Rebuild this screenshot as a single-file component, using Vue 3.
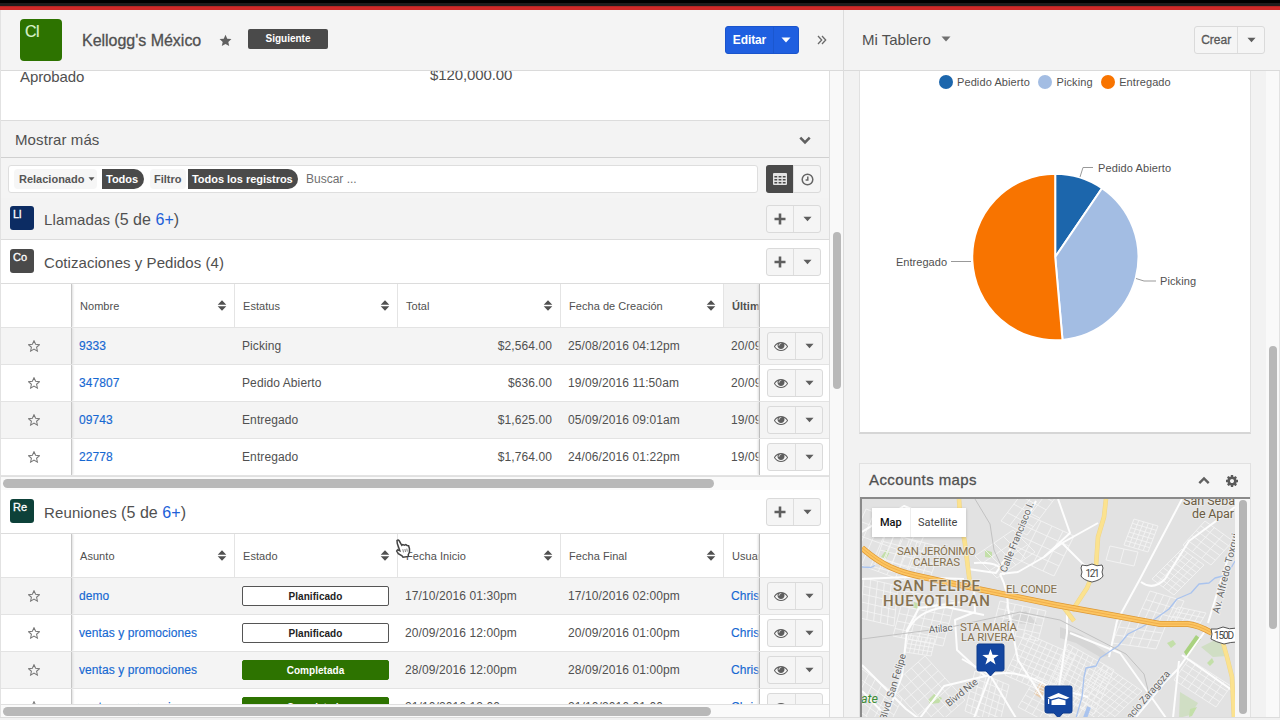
<script setup>
const quotes = {
  heads: ['Nombre', 'Estatus', 'Total', 'Fecha de Creación'],
  last: 'Última Modificación',
  sorted: true,
  rows: [
    ['9333', 'Picking', '$2,564.00', '25/08/2016 04:12pm', '20/09/2016'],
    ['347807', 'Pedido Abierto', '$636.00', '19/09/2016 11:50am', '20/09/2016'],
    ['09743', 'Entregado', '$1,625.00', '05/09/2016 09:01am', '19/09/2016'],
    ['22778', 'Entregado', '$1,764.00', '24/06/2016 01:22pm', '19/09/2016'],
  ],
}
const meetings = {
  heads: ['Asunto', 'Estado', 'Fecha Inicio', 'Fecha Final'],
  last: 'Usuario',
  sorted: false,
  rows: [
    ['demo', 'Planificado', '17/10/2016 01:30pm', '17/10/2016 02:00pm', 'Christian'],
    ['ventas y promociones', 'Planificado', '20/09/2016 12:00pm', '20/09/2016 01:00pm', 'Christian'],
    ['ventas y promociones', 'Completada', '28/09/2016 12:00pm', '28/09/2016 01:00pm', 'Christian'],
    ['ventas y promociones', 'Completada', '21/10/2016 12:00pm', '21/10/2016 01:00pm', 'Christian'],
  ],
}
const panels = [
  { abbr: 'Ll', tone: 'navy', name: 'Llamadas', count: '5 de ', more: '6+' },
  { abbr: 'Co', tone: 'gray', name: 'Cotizaciones y Pedidos', count: '4', more: '', table: quotes },
  { abbr: 'Re', tone: 'teal', name: 'Reuniones', count: '5 de ', more: '6+', table: meetings },
]
const legend = [
  { label: 'Pedido Abierto', tone: 'l-blue' },
  { label: 'Picking', tone: 'l-pale' },
  { label: 'Entregado', tone: 'l-orange' },
]

// Each block of streets: origin, two side vectors, and the number of cells along each side.
const blocks = [
  [866, 508, 60, 22, -22, 50, 7, 4],
  [886, 532, 55, 14, -12, 34, 7, 4],
  [864, 577, 34, 8, -4, 40, 5, 5],
  [905, 590, 50, 10, -12, 45, 6, 6],
  [909, 634, 26, 4, -4, 17, 6, 4],
  [862, 668, 40, 30, -16, 32, 6, 4],
  [925, 655, 40, 44, -34, 30, 6, 5],
  [975, 555, 38, -26, 22, 22, 4, 3],
  [1001, 520, 32, -42, 26, 14, 5, 3],
  [1030, 515, 44, 20, -20, 40, 4, 4],
  [1000, 600, 46, 10, -8, 30, 6, 4],
  [1025, 632, 50, 22, -20, 42, 9, 8],
  [1068, 643, 46, 26, -20, 44, 9, 9],
  [1036, 676, 50, 26, -18, 30, 7, 5],
  [1104, 664, 38, 26, -36, 34, 8, 8],
  [1134, 518, 24, 7, -10, 26, 5, 6],
  [1110, 545, 28, 6, -4, 14, 2, 1],
  [1182, 548, 22, 16, -30, 30, 4, 8],
  [1205, 520, 28, 20, -22, 24, 3, 5],
  [1150, 590, 34, 10, -12, 26, 5, 3],
  [1122, 618, 44, 6, -10, 24, 5, 3],
  [1178, 606, 28, 6, -8, 14, 5, 3],
  [1189, 658, 42, 27, -15, 21, 6, 4],
  [975, 670, 34, 14, -10, 40, 6, 6],
]
const streets = blocks
  .map(([x, y, ux, uy, vx, vy, nu, nv]) => {
    let d = ''
    for (let i = 0; i <= nu; i++) {
      const t = i / nu
      d += `M${x + ux * t} ${y + uy * t}l${vx} ${vy}`
    }
    for (let j = 0; j <= nv; j++) {
      const t = j / nv
      d += `M${x + vx * t} ${y + vy * t}l${ux} ${uy}`
    }
    return d
  })
  .join('')
</script>

<template>
  <div class="screen">
    <svg class="defs" width="0" height="0">
      <symbol id="i-star" viewBox="0 0 14 14">
        <path d="M7 .8l1.900 4.200 4.500.5-3.400 3 1 4.500L7 10.700 3 13l1-4.500-3.400-3 4.500-.5z" />
      </symbol>
      <symbol id="i-caret" viewBox="0 0 10 6"><path d="M.5.5h9L5 5.500z" /></symbol>
      <symbol id="i-plus" viewBox="0 0 12 12"><path d="M4.700.5h2.600v4.200h4.200v2.600H7.300v4.200H4.700V7.300H.5V4.700h4.200z" /></symbol>
      <symbol id="i-sort" viewBox="0 0 10 11"><path d="M5 .3l4.300 4.400H.7zM5 10.700L.7 6.300h8.600z" /></symbol>
      <symbol id="i-eye" viewBox="0 0 1792 1792">
        <path d="M1664 960q-152-236-381-353 61 104 61 225 0 185-131.500 316.500t-316.500 131.500-316.500-131.500-131.500-316.500q0-121 61-225-229 117-381 353 133 205 333.500 326.500t434.500 121.500 434.500-121.500 333.500-326.500zm-720-384q0-20-14-34t-34-14q-125 0-214.500 89.500t-89.500 214.500q0 20 14 34t34 14 34-14 14-34q0-86 61-147t147-61q20 0 34-14t14-34zm848 384q0 34-20 69-140 230-376.500 368.500t-499.500 138.500-499.500-139-376.500-368q-20-35-20-69t20-69q140-229 376.500-368t499.500-139 499.500 139 376.500 368q20 35 20 69z" />
      </symbol>
    </svg>

    <div class="topbar"></div>

    <div class="columns">
      <main class="record">
        <header class="head">
          <span class="module">Cl</span>
          <h1 class="name">Kellogg's México</h1>
          <svg class="fav" width="13" height="13"><use href="#i-star" /></svg>
          <span class="next">Siguiente</span>
          <div class="edit">
            <span class="edit-label">Editar</span>
            <span class="edit-caret"><svg width="10" height="6"><use href="#i-caret" /></svg></span>
          </div>
          <svg class="more" width="10" height="10" viewBox="0 0 10 10"><path d="M1 1l3.700 4L1 9M5 1l3.700 4L5 9" /></svg>
        </header>

        <div class="body">
          <div class="scroll">
            <div class="fields">
              <span class="status">Aprobado</span>
              <span class="amount">$120,000.00</span>
            </div>
            <div class="show-more">
              <span>Mostrar más</span>
              <svg width="12" height="9" viewBox="0 0 12 9"><path d="M1.300 1.700L6 6.500l4.700-4.800" /></svg>
            </div>
            <div class="filters">
              <div class="search">
                <span class="chip rel">Relacionado <svg width="7" height="4"><use href="#i-caret" /></svg></span>
                <span class="pill p1">Todos</span>
                <span class="chip fil">Filtro</span>
                <span class="pill p2">Todos los registros</span>
                <span class="hint">Buscar ...</span>
              </div>
              <div class="btns toggle">
                <span class="btn on">
                  <svg width="14" height="12" viewBox="0 0 14 12">
                    <path fill-rule="evenodd" d="M1 0h12a1 1 0 0 1 1 1v10a1 1 0 0 1-1 1H1a1 1 0 0 1-1-1V1a1 1 0 0 1 1-1zM1.400 3v1.500h2.800V3zm4.200 0v1.500h2.800V3zm4.200 0v1.500h2.800V3zM1.400 6v1.500h2.800V6zm4.200 0v1.500h2.800V6zm4.200 0v1.500h2.800V6zM1.400 9v1.500h2.800V9zm4.200 0v1.500h2.800V9zm4.200 0v1.500h2.800V9z" />
                  </svg>
                </span>
                <span class="btn">
                  <svg class="line" width="13" height="13" viewBox="0 0 13 13"><circle cx="6.500" cy="6.500" r="5.300" /><path d="M6.800 3.500v3.400H4.600" /></svg>
                </span>
              </div>
            </div>

            <section v-for="p in panels" :key="p.name" class="panel" :class="{ open: p.table }">
              <div class="panel-head">
                <span class="tag" :class="p.tone">{{ p.abbr }}</span>
                <h2 :class="'t-' + p.tone">{{ p.name }} <span>({{ p.count }}<a v-if="p.more">{{ p.more }}</a>)</span></h2>
                <div class="btns">
                  <span class="btn"><svg width="12" height="12"><use href="#i-plus" /></svg></span>
                  <span class="btn"><svg width="9" height="6"><use href="#i-caret" /></svg></span>
                </div>
              </div>
              <template v-if="p.table">
                <div class="grid" :class="{ short: p.abbr === 'Re' }">
                  <div class="row hrow">
                    <div class="c star"></div>
                    <div v-for="h in p.table.heads" :key="h" class="c th">
                      <span>{{ h }}</span><svg width="10" height="11"><use href="#i-sort" /></svg>
                    </div>
                    <div class="c th last" :class="{ sorted: p.table.sorted }"><span>{{ p.table.last }}</span></div>
                    <div class="c act"></div>
                  </div>
                  <div v-for="(r, i) in p.table.rows" :key="i" class="row" :class="{ odd: i % 2 === 0 }">
                    <div class="c star"><svg class="outline" width="12" height="12"><use href="#i-star" /></svg></div>
                    <div class="c td link">{{ r[0] }}</div>
                    <div class="c td">
                      <span v-if="p.abbr === 'Re'" class="state" :class="{ done: r[1] === 'Completada' }">{{ r[1] }}</span>
                      <template v-else>{{ r[1] }}</template>
                    </div>
                    <div class="c td" :class="{ num: p.abbr === 'Co' }">{{ r[2] }}</div>
                    <div class="c td date">{{ r[3] }}</div>
                    <div class="c td last" :class="{ link: p.abbr === 'Re' }">{{ r[4] }}</div>
                    <div class="c act">
                      <div class="btns">
                        <span class="btn"><svg width="14" height="14"><use href="#i-eye" /></svg></span>
                        <span class="btn"><svg width="9" height="6"><use href="#i-caret" /></svg></span>
                      </div>
                    </div>
                  </div>
                </div>
                <div class="hbar"><i></i></div>
              </template>
            </section>
          </div>
          <div class="vbar"><i></i></div>
        </div>
      </main>

      <aside class="board">
        <header class="head side">
          <span class="title">Mi Tablero</span>
          <svg class="title-caret" width="10" height="6"><use href="#i-caret" /></svg>
          <div class="btns create">
            <span class="btn wide">Crear</span>
            <span class="btn"><svg width="9" height="6"><use href="#i-caret" /></svg></span>
          </div>
        </header>
        <div class="board-body">
          <div class="dashlets">
            <section class="card chart">
              <div class="legend">
                <span v-for="l in legend" :key="l.label"><i :class="l.tone"></i>{{ l.label }}</span>
              </div>
              <svg class="pie" width="390" height="340" viewBox="860 93 390 340">
                <g stroke="#fff" stroke-width="2" stroke-linejoin="round">
                  <path fill="#1c66ac" d="M1055.200 257V173.800a83.200 83.200 0 0 1 46.800 14.400z" />
                  <path fill="#a3bde3" d="M1055.200 257l46.800-68.800A83.200 83.200 0 0 1 1062.500 339.900z" />
                  <path fill="#f87400" d="M1055.200 257l7.300 82.900A83.200 83.200 0 1 1 1055.200 173.800z" />
                </g>
                <path class="lead" d="M1080 177l3-9.500h10M1136 278.500l8 2.500h12M951 261.500h20" />
                <text x="1098" y="172" textLength="73">Pedido Abierto</text>
                <text x="1160" y="285" textLength="36">Picking</text>
                <text x="896" y="265.500" textLength="51">Entregado</text>
              </svg>
            </section>

            <section class="card maps">
              <div class="card-head">
                <h3>Accounts maps</h3>
                <svg class="up" width="12" height="9" viewBox="0 0 12 9"><path d="M1.300 7.200L6 2.400l4.700 4.800" /></svg>
                <svg width="14" height="14" viewBox="0 0 1792 1792">
                  <path d="M1152 896q0-106-75-181t-181-75-181 75-75 181 75 181 181 75 181-75 75-181zm512-109v222q0 12-8 23t-20 13l-185 28q-19 54-39 91 35 50 107 138 10 12 10 25t-9 23q-27 37-99 108t-94 71q-12 0-26-9l-138-108q-44 23-91 38-16 136-29 186-7 28-36 28h-222q-14 0-24.500-8.500t-11.500-21.500l-28-184q-49-16-90-37l-141 107q-10 9-25 9-14 0-25-11-126-114-165-168-7-10-7-23 0-12 8-23 15-21 51-66.500t54-70.500q-27-50-41-99l-183-27q-13-2-21-12.500t-8-23.500v-222q0-12 8-23t19-13l186-28q14-46 39-92-40-57-107-138-10-12-10-24 0-10 9-23 26-36 98.500-107.500t94.500-71.500q13 0 26 10l138 107q44-23 91-38 16-136 29-186 7-28 36-28h222q14 0 24.500 8.500t11.500 21.500l28 184q49 16 90 37l142-107q9-9 24-9 13 0 25 10 129 119 165 170 7 8 7 22 0 12-8 23-15 21-51 66.500t-54 70.500q26 50 41 98l183 28q13 2 21 12.500t8 23.500z" />
                </svg>
              </div>
              <div class="map-frame">
                <svg class="map" width="373" height="219" viewBox="862 498 373 219">
                  <path class="ground" d="M862 498h373v219H862z" />
                  <g class="parks">
                    <path d="M881 556l5-7 4 2-4 7zM985 549l7 2v6l-7-1zM914 601l5 2-2 5-4-2z" />
                    <path d="M928 699l6-6 8 4-3 5-9 1zM1167 642l6-3 3 4-5 4z" />
                    <path class="dull" d="M1201 646l18-9 8 18-14 1zM1180 691l18 11-8 12-11 3z" />
                    <path class="bright" d="M1184 651l12-17 5 4-14 18z" />
                    <path d="M1207 662l5-5 2 4-4 4zM1190 708l7-2-5 9-3 1z" />
                  </g>
                  <path class="sand" d="M1034 693l6-12 6 2-4 15z" />
                  <path class="yard" d="M1060 626l22 8 28 21-10 1-24-14-16-5zM1000 621l26-11 12 14z" />
                  <path class="streets" :d="streets" />
                  <g class="mid">
                    <path d="M906 634q8-24 40-28l38 8" />
                    <path d="M886 717l16-42 5-46 12-22 50-7" />
                    <path d="M862 664l44 44 12 9M862 690l26 27" />
                    <path d="M862 578l46-2 56 2" />
                    <path d="M968 568l28 4 8-12 32-60" />
                    <path d="M1000 573l18-2 26-15 18-14 36-20M1000 573q8 16 8 34l10 52 26 40" />
                    <path d="M1044 556l26-24-12-34" />
                    <path d="M974 562q28-2 30 12" />
                    <path d="M974 587l1 24-20 8 2 30 28 26" />
                    <path d="M920 717l24-32 46-11q28-7 60 12l38 10" />
                    <path d="M990 674l-16 43M990 674l26 43M990 674l-28-16" />
                    <path d="M1067 609v23l-8 54" />
                    <path d="M1182 498l-42 80-23 42-8 36" />
                    <path d="M1235 506l-46 34-24 38q-12 12-24 3" />
                    <path d="M1208 626l-30 42-14 14-28 34M1182 654l54 38" />
                    <path d="M1208 622l14-46 13-40" />
                    <path d="M1070 632l50 20 32 45 14 20M1179 660l-6 57" />
                    <path d="M862 531l42-26 20 8M1062 542l20 20 9 8" />
                  </g>
                  <path class="rail" d="M862 638l84-11 74-16 40 8 66 34 18 20 6 24" />
                  <path class="rail" d="M975 498l15 25 4 26 10 22" />
                  <path class="water" d="M1235 560l-8 14-12 3-6 5-10 1-8 9-14 6-8 10-14 10-13 8-14 7-10 12-18 12-4 8-10 2-2 9-2 20-6 21" />
                  <path class="water wide-water" d="M1089 706l-4 11" />
                  <path class="water" d="M862 566l9 .500 4-2" />
                  <g class="yellow">
                    <path class="edge" d="M959 498l1 15 5 30 5 40M1106 498l-2 18-6 20-2 29-9 22-15 23M1222 638l5 18 5 20 2 41M1062 604l12 16" />
                    <path d="M959 498l1 15 5 30 5 40M1106 498l-2 18-6 20-2 29-9 22-15 23M1222 638l5 18 5 20 2 41M1062 604l12 16" />
                  </g>
                  <path class="hw-edge" d="M862 547q15 13 28 19t28 9l60 13 78 16 66 12 38 7h28q10 1 24 9" />
                  <path class="hw" d="M862 547q15 13 28 19t28 9l60 13 78 16 66 12 38 7h28q10 1 24 9" />
                  <path class="hw-line" d="M862 547q15 13 28 19t28 9l60 13 78 16 66 12 38 7h28q10 1 24 9" />
                  <g class="shield">
                    <path d="M1082 564q5 2 10-1 5 3 10 1l1 3q-2 4 0 8-2 4-11 6-9-2-11-6 2-4 0-8z" />
                    <path d="M1211 628q6 1 12-2 6 3 14 1v14q-6 0-13 2-8-2-13-5 2-5 0-10z" />
                    <text x="1085.500" y="575.500" textLength="14">121</text>
                    <text x="1214" y="638" textLength="20">150D</text>
                  </g>
                  <g class="area">
                    <text x="897" y="554" textLength="79">SAN JERÓNIMO</text>
                    <text x="913" y="565" textLength="47">CALERAS</text>
                    <text x="1006" y="591.500" textLength="51">EL CONDE</text>
                    <text x="960" y="629.500" textLength="57">STA MARÍA</text>
                    <text x="961" y="640" textLength="54">LA RIVERA</text>
                    <g class="big">
                      <text x="893" y="589.500" textLength="87">SAN FELIPE</text>
                      <text x="883" y="604.500" textLength="107">HUEYOTLIPAN</text>
                    </g>
                    <g class="town">
                      <text x="1183" y="504" textLength="52">San Seba</text>
                      <text x="1192" y="516.500" textLength="42">de Apar</text>
                    </g>
                  </g>
                  <g class="road">
                    <text transform="translate(929 632) rotate(-5)" textLength="24">Atilac</text>
                    <text transform="translate(1006 572) rotate(-68)" textLength="75">Calle Francisco I.</text>
                    <text transform="translate(886 720) rotate(-73)" textLength="69">Blvd. San Felipe</text>
                    <text transform="translate(949 706) rotate(-39)" textLength="38">Blvrd Nte</text>
                    <text transform="translate(1219 613) rotate(-76)" textLength="82">Av. Alfredo Toxqui</text>
                    <text transform="translate(1122 729) rotate(-49)" textLength="74">Ignacio Zaragoza</text>
                  </g>
                  <text class="green" x="861" y="702" textLength="17">ate</text>
                  <g class="pin">
                    <path d="M979 643h23a2 2 0 0 1 2 2v23a2 2 0 0 1-2 2h-7l-4.500 5-4.500-5h-7a2 2 0 0 1-2-2v-23a2 2 0 0 1 2-2z" />
                    <path d="M1047 685h23a2 2 0 0 1 2 2v23a2 2 0 0 1-2 2h-7l-4.500 5-4.500-5h-7a2 2 0 0 1-2-2v-23a2 2 0 0 1 2-2z" />
                  </g>
                  <g class="pin-mark">
                    <path d="M990.500 648l2 5.800 6.200.1-5 3.700 1.900 5.900-5.100-3.500-5.100 3.500 1.900-5.900-5-3.700 6.200-.1z" />
                    <path d="M1058.500 692l11 4.800-3.500 1.500-7.500-2-7.500 2-3.500-1.500zM1051.500 699.500l7-2 7 2v4.500h-14zM1048 698h1.200v5h-1.200z" />
                  </g>
                </svg>
                <div class="map-type"><b>Map</b><span>Satellite</span></div>
                <div class="map-bar"><i></i></div>
              </div>
            </section>
          </div>
          <div class="board-bar"><i></i></div>
        </div>
      </aside>
    </div>
    <div class="foot"></div>

    <svg class="cursor" width="16" height="19" viewBox="0 0 16 19">
      <path d="M2 1.600q1-1.200 2.200.2l2.600 4.600 1-.9 1.700.6 1.200-.5 1.400.9 1.500.2.900 3.200-.1 3.300-1.200 2.600.3 1.600-5.500.8-1-1.300-3.700-2.300-1.600-2.500.8-1.200 2.300.9-2.500-7.200z" />
      <path class="knuckle" d="M7.800 10.200l.7 3.200M9.900 10l.6 3M11.800 9.600l.5 3" />
    </svg>
  </div>
</template>

<style>
html, body { margin: 0; overflow: hidden; }
</style>

<style scoped>
* { box-sizing: border-box; }
.screen {
  width: 1280px; height: 720px; overflow: hidden; position: relative;
  display: flex; flex-direction: column; background: #f3f3f3; color: #505050;
  font-family: "Liberation Sans", Arial, sans-serif; font-size: 12px;
}
.defs { position: absolute; }
svg { display: block; flex: none; fill: currentColor; }
h1, h2, h3 { margin: 0; font-weight: 400; }
.topbar { height: 10px; flex: none; background: linear-gradient(#000 0 3px, #201c1c 3px 6px, #b52625 6px 7px, #d02a28 7px 10px); }
.columns { display: flex; height: 707px; }
.foot { height: 3px; background: #f1f1f1; border-top: 1px solid #dcdcdc; }
.record { width: 844px; display: flex; flex-direction: column; border-right: 1px solid #dcdcdc; border-left: 1px solid #e2e2e2; }
.head { height: 61px; flex: none; display: flex; align-items: center; border-bottom: 1px solid #dadada; background: #f4f4f4; padding-left: 19px; }
.module { width: 42px; height: 42px; background: #2d7300; border-radius: 4px; color: #d9f2c8; font-size: 16px; line-height: 16px; padding: 5px 0 0 5px; letter-spacing: -.6px; -webkit-text-stroke: .2px #d9f2c8; }
.name { font-size: 16px; margin-left: 20px; width: 137px; letter-spacing: -.02px; -webkit-text-stroke: .3px #505050; white-space: nowrap; padding-top: 2px; }
.fav { color: #606060; margin-right: 16px; }
.next { width: 80px; height: 20px; background: #4a4a4a; color: #fff; font-weight: 700; font-size: 10px; line-height: 20px; text-align: center; border-radius: 2px; margin-top: -2px; }
.edit { margin-left: 397px; margin-top: -1px; width: 74px; height: 28px; display: flex; align-items: center; background: #1f5fe0; border: 1px solid #1a54cc; border-radius: 3px; color: #fff; }
.edit-label { width: 47px; font-weight: 700; font-size: 12px; text-align: center; letter-spacing: -.1px; }
.edit-caret { flex: 1; height: 26px; display: flex; align-items: center; justify-content: center; border-left: 1px solid #1b57cf; }
.more { margin-left: 18px; fill: none; stroke: #6a6a6a; stroke-width: 1.300; }
.body { display: flex; height: 646px; }
.scroll { width: 829px; height: 646px; overflow: hidden; display: flex; flex-direction: column; border-right: 1px solid #dedede; }
.vbar { flex: 1; background: #f9f9f9; padding: 161px 0 0 3px; }
.vbar i { display: block; width: 8px; height: 157px; border-radius: 4px; background: #b8b8b8; }
.fields { height: 50px; flex: none; display: flex; background: #fff; font-size: 15px; overflow: hidden; border-bottom: 1px solid #dcdcdc; }
.status { width: 429px; padding-left: 19px; line-height: 16px; margin-top: -2px; letter-spacing: -.1px; }
.amount { line-height: 16px; margin-top: -4px; letter-spacing: -.1px; }
.show-more { height: 37px; flex: none; display: flex; align-items: center; justify-content: space-between; padding: 0 18px 0 14px; background: #f3f3f3; border-bottom: 1px solid #d0d0d0; font-size: 15px; letter-spacing: .1px; }
.show-more svg { fill: none; stroke: #606060; stroke-width: 2.600; margin-top: 3px; }
.filters { height: 40px; flex: none; display: flex; padding: 7px 0 0 7px; background: #f4f4f4; }
.search { width: 750px; height: 28px; display: flex; align-items: center; background: #fff; border: 1px solid #dedede; border-radius: 3px; white-space: nowrap; }
.chip { font-weight: 700; font-size: 11px; color: #555; height: 20px; line-height: 20px; background: #f6f6f6; border-radius: 4px; }
.rel { width: 83px; margin-left: 5px; padding-left: 5px; display: flex; align-items: center; gap: 4px; }
.fil { width: 36px; padding-left: 4px; margin-left: 6px; }
.pill { height: 20px; line-height: 20px; background: #4a4a4a; color: #fff; font-weight: 700; font-size: 11px; border-radius: 0 10px 10px 0; padding-left: 4px; }
.p1 { width: 42px; margin-left: 5px; }
.p2 { width: 110px; margin-left: 2px; letter-spacing: -.03px; }
.hint { margin-left: 8px; color: #707070; }
.btns { display: flex; border: 1px solid #dadada; border-radius: 3px; background: #f5f5f5; height: 28px; width: 55px; color: #5e5e5e; }
.btn { width: 27px; height: 26px; display: flex; align-items: center; justify-content: center; }
.btn + .btn { border-left: 1px solid #dedede; }
.toggle { margin-left: 8px; }
.on { background: #4a4a4a; color: #e4e4e4; width: 28px; height: 28px; margin: -1px 0 0 -1px; border-radius: 3px 0 0 3px; }
.line { fill: none; stroke: #666; stroke-width: 1.500; }
.panel { flex: none; background: #f3f3f3; }
.panel-head { height: 42px; display: flex; align-items: center; border-bottom: 1px solid #dcdcdc; padding-left: 9px; }
.open { background: #fff; }
.open .panel-head { height: 44px; }
.tag { width: 24px; height: 24px; border-radius: 3px; color: #fff; font-size: 11px; line-height: 11px; padding: 3px 0 0 3px; -webkit-text-stroke: .3px #fff; margin-top: -1px; }
.navy { background: #0c2c63; } .gray { background: #4a4a4a; } .teal { background: #0d4139; }
.panel-head h2 { font-size: 15px; margin-left: 10px; flex: 1; padding-top: 2px; letter-spacing: .12px; }
.panel-head h2 span { font-size: 16px; letter-spacing: .05px; }
.panel-head h2.t-gray { letter-spacing: .06px; }
.panel-head h2.t-gray span { font-size: 15px; }
.panel-head a { color: #2160d8; }
.panel-head .btns { margin-right: 8px; }
.grid { width: 828px; overflow: hidden; }
.short { height: 170px; }
.row { height: 37px; display: flex; border-bottom: 1px solid #e3e3e3; background: #fff; }
.odd { background: #f4f4f4; }
.hrow { height: 44px; }
.c { flex: none; display: flex; align-items: center; width: 163px; white-space: nowrap; overflow: hidden; }
.star { width: 71px; justify-content: center; padding-right: 5px; border-right: 1px solid #c6c6c6; box-shadow: 1px 0 2px #ddd; clip-path: inset(0 -4px 0 0); }
.outline { fill: none; stroke: #777; stroke-width: 1.200; overflow: visible; }
.th { font-size: 11px; justify-content: space-between; padding: 0 7px 0 8px; border-right: 1px solid #e4e4e4; letter-spacing: .05px; }
.td { padding-left: 7px; font-size: 12px; letter-spacing: .1px; }
.num { justify-content: flex-end; padding-right: 9px; }
.link { color: #1668d2; -webkit-text-stroke: .15px #1668d2; letter-spacing: .07px; }
.c.last { width: 35px; border-right: 0; padding-right: 0; }
.sorted { background: #f3f3f3; font-weight: 700; }
.act { width: 71px; border-left: 1px solid #bdbdbd; padding-left: 7px; box-shadow: -1px 0 2px #ddd; clip-path: inset(0 0 0 -4px); }
.act .btns { width: 56px; }
.act .btn:first-child { width: 28px; padding-right: 1px; }
.act .btn:last-child { width: 27px; }
.state { width: 147px; height: 20px; line-height: 19px; border: 1px solid #555; background: #fff; border-radius: 2px; text-align: center; font-weight: 700; font-size: 10px; color: #222; letter-spacing: .05px; }
.done { background: #2d7300; border-color: #2d7300; color: #fff; }
.hbar { height: 14px; background: #fafafa; padding: 2px 0 0 2px; border-top: 1px solid #e0e0e0; }
.hbar i { display: block; width: 711px; height: 9px; border-radius: 5px; background: #b8b8b8; }
.short + .hbar i { width: 708px; }
.board { width: 436px; display: flex; flex-direction: column; }
.side { padding-left: 18px; background: #f3f3f3; }
.title { font-size: 15px; width: 79px; margin-top: -2px; letter-spacing: 0; white-space: nowrap; }
.title-caret { color: #707070; margin-top: -2px; }
.create { margin-left: 243px; margin-top: -1px; width: 71px; }
.create .wide { width: 43px; font-size: 12px; -webkit-text-stroke: .3px #505050; }
.board-body { display: flex; height: 646px; }
.dashlets { width: 422px; overflow: hidden; padding-left: 15px; display: flex; flex-direction: column; gap: 29px; background: #f2f2f2; }
.board-bar { width: 14px; background: #f9f9f9; border-right: 1px solid #e2e2e2; padding: 275px 0 0 3px; }
.board-bar i { display: block; width: 8px; height: 283px; border-radius: 4px; background: #b8b8b8; }
.card { width: 392px; flex: none; border: 1px solid #e1e1e1; }
.chart { height: 363px; background: #fff; border-top: 0; border-bottom: 2px solid #d6d6d6; }
.legend { height: 22px; display: flex; align-items: center; padding-left: 79px; font-size: 11px; letter-spacing: .1px; }
.legend span { display: flex; align-items: center; margin-right: 8.500px; }
.legend i { width: 14px; height: 14px; border-radius: 50%; margin-right: 4px; }
.l-blue { background: #1c66ac; } .l-pale { background: #a3bde3; } .l-orange { background: #f87400; }
.pie { font-size: 11px; }
.lead { fill: none; stroke: #999; stroke-width: 1; }
.maps { height: 255px; background: #f5f5f5; }
.card-head { height: 33px; display: flex; align-items: center; padding: 0 11px 0 9px; }
.card-head h3 { font-size: 15px; flex: 1; -webkit-text-stroke: .3px #505050; letter-spacing: .42px; margin-top: -2px; }
.card-head .up { fill: none; stroke: #606060; stroke-width: 2.400; margin-right: 15px; }
.card-head svg { color: #5a5a5a; }
.map-frame { position: relative; height: 220px; width: 390px; display: flex; border-top: 2px solid #8a8a8a; border-left: 2px solid #8a8a8a; }
.map-bar { width: 15px; padding: 1px 0 0 4px; background: #f7f7f7; }
.map-bar i { display: block; width: 8px; height: 214px; border-radius: 4px; background: #b5b5b5; }
.map-type { position: absolute; left: 10px; top: 9px; display: flex; align-items: center; width: 94px; height: 29px; background: #fff; box-shadow: 0 1px 3px #0003; font: 11px Roboto, sans-serif; color: #444; }
.map-type b { width: 38px; padding-left: 8px; font-weight: 500; color: #111; }
.map-type span { padding-left: 7px; flex: 1; line-height: 29px; border-left: 1px solid #eee; }
.map { font-family: Roboto, sans-serif; }
.map path { fill: none; }
.map .ground { fill: #e2e2e2; }
.map .parks path { fill: #c3dfa9; }
.map .parks .dull { fill: #d0dec4; }
.map .parks .bright { fill: #a9d27f; }
.map .sand { fill: #e8cdb0; }
.map .yard { fill: #d6d6d6; }
.streets { stroke: #f4f4f4; stroke-width: .85; }
.mid path { stroke: #fdfdfd; stroke-width: 2; stroke-linejoin: round; }
.rail { stroke: #c2c2c2; stroke-width: 1; }
.water { stroke: #a9c3ee; stroke-width: 1.300; stroke-linejoin: round; }
.wide-water { stroke-width: 4; }
.yellow path { stroke: #fbe28f; stroke-width: 3.600; stroke-linejoin: round; }
.yellow .edge { stroke: #efd58a; stroke-width: 4.600; }
.hw-edge { stroke: #dd9733; stroke-width: 6; }
.hw { stroke: #fcc561; stroke-width: 4.600; }
.hw-line { stroke: #eda848; stroke-width: .8; }
.map .shield path { fill: #fff; stroke: #555; stroke-width: 1; }
.shield text { font-size: 10px; fill: #444; }
.area text { font-size: 11.500px; fill: #85714f; stroke: #eee; stroke-width: 2; paint-order: stroke; stroke-opacity: .6; }
.area .big text { font-size: 15px; font-weight: 500; }
.area .town text { font-size: 12.500px; fill: #6b5c42; }
.road text { font-size: 10px; fill: #666; stroke: #eee; stroke-width: 2; paint-order: stroke; }
.green { font-size: 12.500px; font-style: italic; fill: #3e8d34; }
.map .pin path { fill: #1446a0; stroke: #0d3a8c; stroke-width: 1; }
.map .pin-mark path { fill: #fff; }
.cursor { position: absolute; left: 395px; top: 539px; }
.cursor path { fill: #fff; stroke: #444; stroke-width: 1.500; }
.cursor .knuckle { fill: none; stroke: #777; stroke-width: .9; }
</style>
